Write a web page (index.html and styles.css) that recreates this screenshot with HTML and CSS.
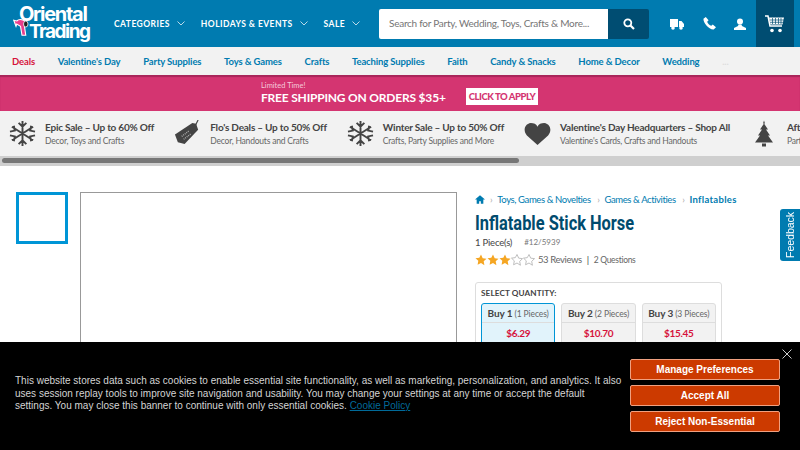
FILE: index.html
```html
<!DOCTYPE html>
<html lang="en">

<head>
	<meta charset="utf-8">
	<title>Inflatable Stick Horse</title>
	<link rel="stylesheet" href="styles.css">
</head>

<body>
	<svg class="defs" width="0" height="0"><symbol id="star" viewBox="0 0 24 24"><path d="M12 1l3.400 7.300 7.600 1-5.600 5.400 1.400 7.800L12 18l-6.800 3.500 1.400-7.800L1 8.300l7.600-1z"/></symbol></svg>
	<header class="top-bar">
		<a class="logo">
			<span class="logo-line logo-one">Oriental</span>
			<span class="logo-line logo-two">Trading</span>
			<svg class="logo-bird" viewBox="0 0 24 24">
				<path d="M1 3l3 8 1-3 5 3 2 12h5l-2-14 3 2 1-5-5-3C9 1 6 3 5 4z" fill="#e83e8c" stroke="#fff" stroke-width="1.5"/>
				<ellipse cx="17" cy="8" rx="3" ry="4" fill="#222" stroke="#fff"/>
			</svg>
		</a>
		<nav class="main-nav">
			<a>CATEGORIES<svg class="chev" viewBox="0 0 8 5"><path d="M.5.5L4 4 7.500.5"/></svg></a>
			<a>HOLIDAYS &amp; EVENTS<svg class="chev" viewBox="0 0 8 5"><path d="M.5.5L4 4 7.500.5"/></svg></a>
			<a>SALE<svg class="chev" viewBox="0 0 8 5"><path d="M.5.5L4 4 7.500.5"/></svg></a>
		</nav>
		<div class="search">
			<div class="search-input">Search for Party, Wedding, Toys, Crafts &amp; More...</div>
			<div class="search-btn">
				<svg viewBox="0 0 12 12" width="12" height="12"><circle cx="4.800" cy="4.800" r="3.500" fill="none" stroke="#fff" stroke-width="1.800"/><path d="M7.500 7.500L11 11" stroke="#fff" stroke-width="2.200"/></svg>
			</div>
		</div>
		<div class="top-icons">
			<svg viewBox="0 0 14 12" width="14" height="12"><path d="M0 1h8v8H0zM9 3h2.500L14 6v3H9z" fill="#fff"/><circle cx="3" cy="10" r="1.800" fill="#fff"/><circle cx="11" cy="10" r="1.800" fill="#fff"/></svg>
			<svg viewBox="0 0 14 14" width="13" height="13"><path d="M3 0L.5 2c-.5 4 6 12 11 11.500L14 11 10.500 8 9 9.500C7 9 5 7 4.500 5L6 3.500z" fill="#fff"/></svg>
			<svg viewBox="0 0 12 12" width="12" height="12"><circle cx="6" cy="3.500" r="3" fill="#fff"/><path d="M4.500 6.500L4 8 0 10v2h12v-2L8 8l-.5-1.500z" fill="#fff"/></svg>
		</div>
		<div class="cart">
			<svg viewBox="0 0 20 18" width="20" height="18"><path d="M0 1h3l2 10h12" fill="none" stroke="#fff" stroke-width="1.500"/><path d="M4 2.500h15l-1.500 7H5.500z" fill="#fff"/><path d="M7.500 3v6M10.500 3v6M13.500 3v6M16 3v6M5 5h14M5 7.300h13" stroke="#004d72" stroke-width=".7"/><circle cx="7" cy="15.500" r="1.800" fill="#fff"/><circle cx="15" cy="15.500" r="1.800" fill="#fff"/></svg>
		</div>
	</header>

	<nav class="sub-nav">
		<a class="deals">Deals</a>
		<a>Valentine's Day</a>
		<a>Party Supplies</a>
		<a>Toys &amp; Games</a>
		<a>Crafts</a>
		<a>Teaching Supplies</a>
		<a>Faith</a>
		<a>Candy &amp; Snacks</a>
		<a>Home &amp; Decor</a>
		<a>Wedding</a>
		<a class="more">...</a>
	</nav>

	<div class="promo-bar">
		<div class="promo-text">
			<small>Limited Time!</small>
			<strong>FREE SHIPPING ON ORDERS $35+</strong>
		</div>
		<a class="promo-btn">CLICK TO APPLY</a>
	</div>

	<div class="deals-strip">
		<div class="deal">
			<svg class="deal-icon" viewBox="0 0 28 28"><g stroke="#444" stroke-width="2" fill="none"><path d="M14 1v26M3 7l22 14M25 7L3 21M10 3l4 4 4-4M10 25l4-4 4 4M1 12l5-1-1-5M27 12l-5-1 1-5M1 16l5 1-1 5M27 16l-5 1 1 5"/></g></svg>
			<div><p class="deal-name">Epic Sale – Up to 60% Off</p><p class="deal-sub">Decor, Toys and Crafts</p></div>
		</div>
		<div class="deal">
			<svg class="deal-icon" viewBox="0 0 28 28"><path d="M1 15L19 3l4 1 2 6-14 15-7-2z" fill="#444"/><path d="M22 6l3-6" stroke="#444" stroke-width="1.200"/><path d="M8 17l8-6M10 20l8-6" stroke="#aaa" stroke-width="1.500" stroke-dasharray="1 1"/></svg>
			<div><p class="deal-name">Flo's Deals – Up to 50% Off</p><p class="deal-sub">Decor, Handouts and Crafts</p></div>
		</div>
		<div class="deal">
			<svg class="deal-icon" viewBox="0 0 28 28"><g stroke="#444" stroke-width="2" fill="none"><path d="M14 1v26M3 7l22 14M25 7L3 21M10 3l4 4 4-4M10 25l4-4 4 4M1 12l5-1-1-5M27 12l-5-1 1-5M1 16l5 1-1 5M27 16l-5 1 1 5"/></g></svg>
			<div><p class="deal-name">Winter Sale – Up to 50% Off</p><p class="deal-sub">Crafts, Party Supplies and More</p></div>
		</div>
		<div class="deal">
			<svg class="deal-icon" viewBox="0 0 28 24"><path d="M14 24L3 14C-1 10 0 2 7 1c3 0 6 1 7 4 1-3 4-4 7-4 7 1 8 9 4 13z" fill="#444"/></svg>
			<div><p class="deal-name">Valentine's Day Headquarters – Shop All</p><p class="deal-sub">Valentine's Cards, Crafts and Handouts</p></div>
		</div>
		<div class="deal">
			<svg class="deal-icon tree" viewBox="0 0 18 26"><path d="M9 0l1 3H8zM9 3l4 6h-2l4 6h-2l5 7H0l5-7H3l4-6H5z" fill="#444"/><path d="M7 23h4v3H7z" fill="#444"/></svg>
			<div><p class="deal-name">After</p><p class="deal-sub">Party</p></div>
		</div>
	</div>
	<div class="scroll-track"><div class="scroll-thumb"></div></div>

	<main class="product">
		<div class="thumb"></div>
		<div class="main-image"></div>
		<section class="info">
			<div class="crumbs">
				<svg viewBox="0 0 12 10" width="10" height="9"><path d="M6 0L0 5h2v5h3V7h2v3h3V5h2z" fill="#007bb0"/></svg>
				<i>›</i><a>Toys, Games &amp; Novelties</a>
				<i>›</i><a>Games &amp; Activities</a>
				<i>›</i><a class="current">Inflatables</a>
			</div>
			<h1>Inflatable Stick Horse</h1>
			<div class="meta"><span>1 Piece(s)</span><span class="sku">#12/5939</span></div>
			<div class="rating">
				<svg class="star"><use href="#star"/></svg>
				<svg class="star"><use href="#star"/></svg>
				<svg class="star"><use href="#star"/></svg>
				<svg class="star empty"><use href="#star"/></svg>
				<svg class="star empty"><use href="#star"/></svg>
				<span class="reviews">53 Reviews</span><span class="sep">|</span><span class="questions">2 Questions</span>
			</div>
			<div class="qty-box">
				<div class="qty-label">SELECT QUANTITY:</div>
				<div class="qty-options">
					<div class="qty selected"><div class="qty-head"><b>Buy 1</b> (1 Pieces)</div><div class="qty-price">$6.29</div></div>
					<div class="qty"><div class="qty-head"><b>Buy 2</b> (2 Pieces)</div><div class="qty-price">$10.70</div></div>
					<div class="qty"><div class="qty-head"><b>Buy 3</b> (3 Pieces)</div><div class="qty-price">$15.45</div></div>
				</div>
			</div>
		</section>
	</main>

	<a class="feedback">Feedback</a>

	<div class="cookie">
		<p class="cookie-text">This website stores data such as cookies to enable essential site functionality, as well as marketing, personalization, and analytics. It also uses session replay tools to improve site navigation and usability. You may change your settings at any time or accept the default settings. You may close this banner to continue with only essential cookies. <a>Cookie Policy</a></p>
		<div class="cookie-btns">
			<button>Manage Preferences</button>
			<button>Accept All</button>
			<button>Reject Non-Essential</button>
		</div>
		<svg class="cookie-close" viewBox="0 0 10 10" width="10" height="10"><path d="M.5.5l9 9M9.500.5l-9 9" stroke="#ccc" stroke-width="1"/></svg>
	</div>
</body>
</html>
```

FILE: styles.css
```css
:root {
	--blue: #007bb0;
	--dark-blue: #004d72;
	--title-blue: #004b6e;
	--pink: #d43571;
	--red: #d6123c;
	--text: #444;
}

* {
	box-sizing: border-box;
}

html,
body {
	height: 450px;
	overflow: hidden;
}

body {
	margin: 0;
	background-color: #fff;
	color: var(--text);
	font-family: 'Lato', 'Open Sans', sans-serif;
}

p {
	margin: 0;
}

.defs {
	display: block;
	height: 0;
}

/* top bar */
.top-bar {
	display: flex;
	height: 47px;
	background-color: var(--blue);
}

.logo {
	position: relative;
	flex: none;
	width: 114px;
	color: #fff;
	font-family: 'Inter', sans-serif;
	font-weight: 700;
	font-size: 20px;
	letter-spacing: -1.300px;
	line-height: 17px;
}

.logo-line {
	position: absolute;
}

.logo-one {
	left: 19px;
	top: 6px;
}

.logo-two {
	left: 29px;
	top: 23px;
	font-size: 19px;
	letter-spacing: -1.500px;
}

.logo-bird {
	position: absolute;
	left: 13px;
	top: 18px;
	width: 18px;
	height: 18px;
}

.main-nav {
	display: flex;
	flex: none;
	width: 265px;
	align-items: center;
	gap: 16px;
}

.main-nav a {
	display: flex;
	align-items: center;
	gap: 7px;
	color: #fff;
	font-size: 8.500px;
	font-weight: 700;
	letter-spacing: .45px;
	white-space: nowrap;
}

.chev {
	width: 8px;
	height: 5px;
	fill: none;
	stroke: #cfe4ee;
	stroke-width: .9;
}

.search {
	display: flex;
	flex: none;
	width: 270px;
	height: 30px;
	margin-top: 9px;
	border-radius: 2px;
	overflow: hidden;
}

.search-input {
	flex: 1;
	min-width: 0;
	padding-left: 10px;
	background-color: #fff;
	color: #757575;
	font-size: 10px;
	letter-spacing: -.25px;
	line-height: 29px;
	white-space: nowrap;
}

.search-btn {
	display: flex;
	flex: none;
	width: 41px;
	align-items: center;
	justify-content: center;
	background-color: var(--dark-blue);
}

.top-icons {
	display: flex;
	flex: none;
	width: 107px;
	padding: 0 10px 0 21px;
	align-items: center;
	justify-content: space-between;
}

.cart {
	display: flex;
	flex: none;
	width: 38px;
	align-items: center;
	justify-content: center;
	background-color: var(--dark-blue);
}

/* sub nav */
.sub-nav {
	display: flex;
	height: 28px;
	padding-left: 12px;
	align-items: center;
	gap: 22.700px;
	background-color: #f2f2f2;
	color: var(--blue);
	font-size: 9.500px;
	font-weight: 700;
	letter-spacing: -.13px;
	white-space: nowrap;
}

.sub-nav .deals {
	color: var(--red);
}

.sub-nav .more {
	color: #ddd;
}

/* promo */
.promo-bar {
	display: flex;
	height: 36px;
	padding-left: 261px;
	align-items: center;
	gap: 20px;
	background-color: var(--pink);
	box-shadow: inset 0 2px 1px #a8265a;
	color: #fff;
}

.promo-text small {
	display: block;
	color: #f5c9da;
	font-size: 7.500px;
	line-height: 9px;
}

.promo-text strong {
	display: block;
	font-size: 12px;
	font-weight: 700;
	letter-spacing: -.2px;
	line-height: 16px;
	white-space: nowrap;
}

.promo-btn {
	margin-top: 6px;
	padding: 0 3px;
	background-color: #fff;
	color: var(--pink);
	font-size: 9.500px;
	font-weight: 900;
	letter-spacing: -.45px;
	line-height: 17px;
	white-space: nowrap;
}

/* deals strip */
.deals-strip {
	display: flex;
	height: 45px;
	padding: 0 0 0 9px;
	align-items: center;
	gap: 20px;
	background-color: #f2f2f2;
	overflow: hidden;
	white-space: nowrap;
}

.deal {
	display: flex;
	flex: none;
	align-items: center;
	gap: 9px;
}

.deal-icon {
	flex: none;
	width: 27px;
	height: 27px;
}

.deal-icon.tree {
	width: 18px;
	margin-left: 5px;
	margin-right: 5px;
}

.deal-name {
	color: #444;
	font-size: 10px;
	font-weight: 700;
	letter-spacing: -.22px;
	line-height: 14px;
}

.deal-sub {
	color: #666;
	font-size: 8.500px;
	letter-spacing: -.2px;
	line-height: 14px;
}

.scroll-track {
	height: 10px;
	padding: 2px;
	background-color: #cfcfcf;
}

.scroll-thumb {
	width: 517px;
	height: 5px;
	border-radius: 3px;
	background-color: #777;
}

/* product */
.product {
	display: flex;
	padding: 26px 0 0 16px;
	align-items: flex-start;
}

.thumb {
	flex: none;
	width: 52px;
	height: 52px;
	border: 3px solid #0095d6;
}

.main-image {
	flex: none;
	width: 377px;
	height: 377px;
	margin-left: 12px;
	border: 1px solid #999;
}

.info {
	flex: none;
	width: 247px;
	margin-left: 18px;
}

.crumbs {
	display: flex;
	height: 14px;
	align-items: center;
	gap: 5px;
	color: var(--blue);
	font-size: 9.500px;
	letter-spacing: -.4px;
	white-space: nowrap;
}

.crumbs svg {
	flex: none;
}

.crumbs i {
	color: #aaa;
	font-style: normal;
}

.crumbs a {
	margin-right: 1.500px;
}

.crumbs .current {
	font-weight: 700;
	letter-spacing: .3px;
}

h1 {
	margin: 5px 0 0;
	color: var(--title-blue);
	font-family: 'Roboto', sans-serif;
	font-size: 20px;
	font-weight: 700;
	line-height: 25px;
	white-space: nowrap;
	transform: scaleX(.82);
	transform-origin: left;
}

.meta {
	display: flex;
	gap: 12px;
	align-items: center;
	font-size: 9.500px;
	letter-spacing: -.2px;
	line-height: 13px;
}

.sku {
	color: #777;
	font-size: 8px;
	letter-spacing: 0;
}

.rating {
	display: flex;
	margin-top: 3px;
	align-items: center;
	font-size: 9.500px;
	letter-spacing: -.4px;
	line-height: 16px;
	color: #666;
	white-space: nowrap;
}

.star {
	flex: none;
	width: 12px;
	height: 12px;
	fill: #f5a623;
}

.star.empty {
	fill: none;
	stroke: #aaa;
	stroke-width: 1.500;
}

.reviews {
	margin-left: 3px;
}

.sep {
	margin: 0 5px;
	color: #444;
}

.questions {
	font-size: 8.500px;
	letter-spacing: -.3px;
}

.qty-box {
	height: 90px;
	margin-top: 14px;
	padding: 5px 5px 0;
	border: 1px solid #ddd;
	border-radius: 3px;
}

.qty-label {
	color: #444;
	font-size: 8.200px;
	font-weight: 700;
	letter-spacing: .1px;
	line-height: 11px;
}

.qty-options {
	display: flex;
	margin-top: 4px;
	gap: 6px;
}

.qty {
	flex: 1;
	height: 60px;
	border: 1px solid #ddd;
	border-radius: 3px;
	background-color: #f2f2f2;
	text-align: center;
}

.qty.selected {
	border-color: #0095d6;
	background-color: #e1f3fb;
}

.qty-head {
	height: 19px;
	border-bottom: 1px solid #ddd;
	color: #666;
	font-size: 8.500px;
	letter-spacing: -.1px;
	line-height: 18px;
	white-space: nowrap;
}

.qty-head b {
	color: #444;
	font-size: 10px;
	font-weight: 700;
}

.qty-price {
	color: var(--red);
	font-size: 10px;
	font-weight: 700;
	letter-spacing: -.3px;
	line-height: 20px;
}

/* feedback tab */
.feedback {
	position: fixed;
	top: 209px;
	right: 0;
	display: flex;
	width: 20px;
	height: 52px;
	align-items: center;
	justify-content: center;
	background-color: var(--blue);
	color: #fff;
	font-family: 'Liberation Sans', sans-serif;
	font-size: 10.500px;
	writing-mode: vertical-rl;
	rotate: 180deg;
	border-radius: 0 3px 3px 0;
}

/* cookie banner */
.cookie {
	position: fixed;
	left: 0;
	right: 0;
	bottom: 0;
	display: flex;
	height: 108px;
	padding: 17px 20px 0 15px;
	justify-content: space-between;
	background-color: #000;
	font-family: 'Liberation Sans', Arial, sans-serif;
}

.cookie-text {
	width: 608px;
	margin-top: 16px;
	color: #d4d4d4;
	font-size: 10px;
	line-height: 12.600px;
}

.cookie-text a {
	color: #006a99;
	text-decoration: underline;
}

.cookie-btns {
	display: flex;
	flex-direction: column;
	flex: none;
	width: 150px;
	gap: 5px;
}

.cookie-btns button {
	height: 21px;
	padding: 0;
	border: 1px solid #f0a080;
	border-radius: 2px;
	background-color: #cc3a00;
	color: #fff;
	font-family: inherit;
	font-size: 10px;
	font-weight: 700;
}

.cookie-close {
	position: absolute;
	top: 7px;
	right: 8px;
}
```
